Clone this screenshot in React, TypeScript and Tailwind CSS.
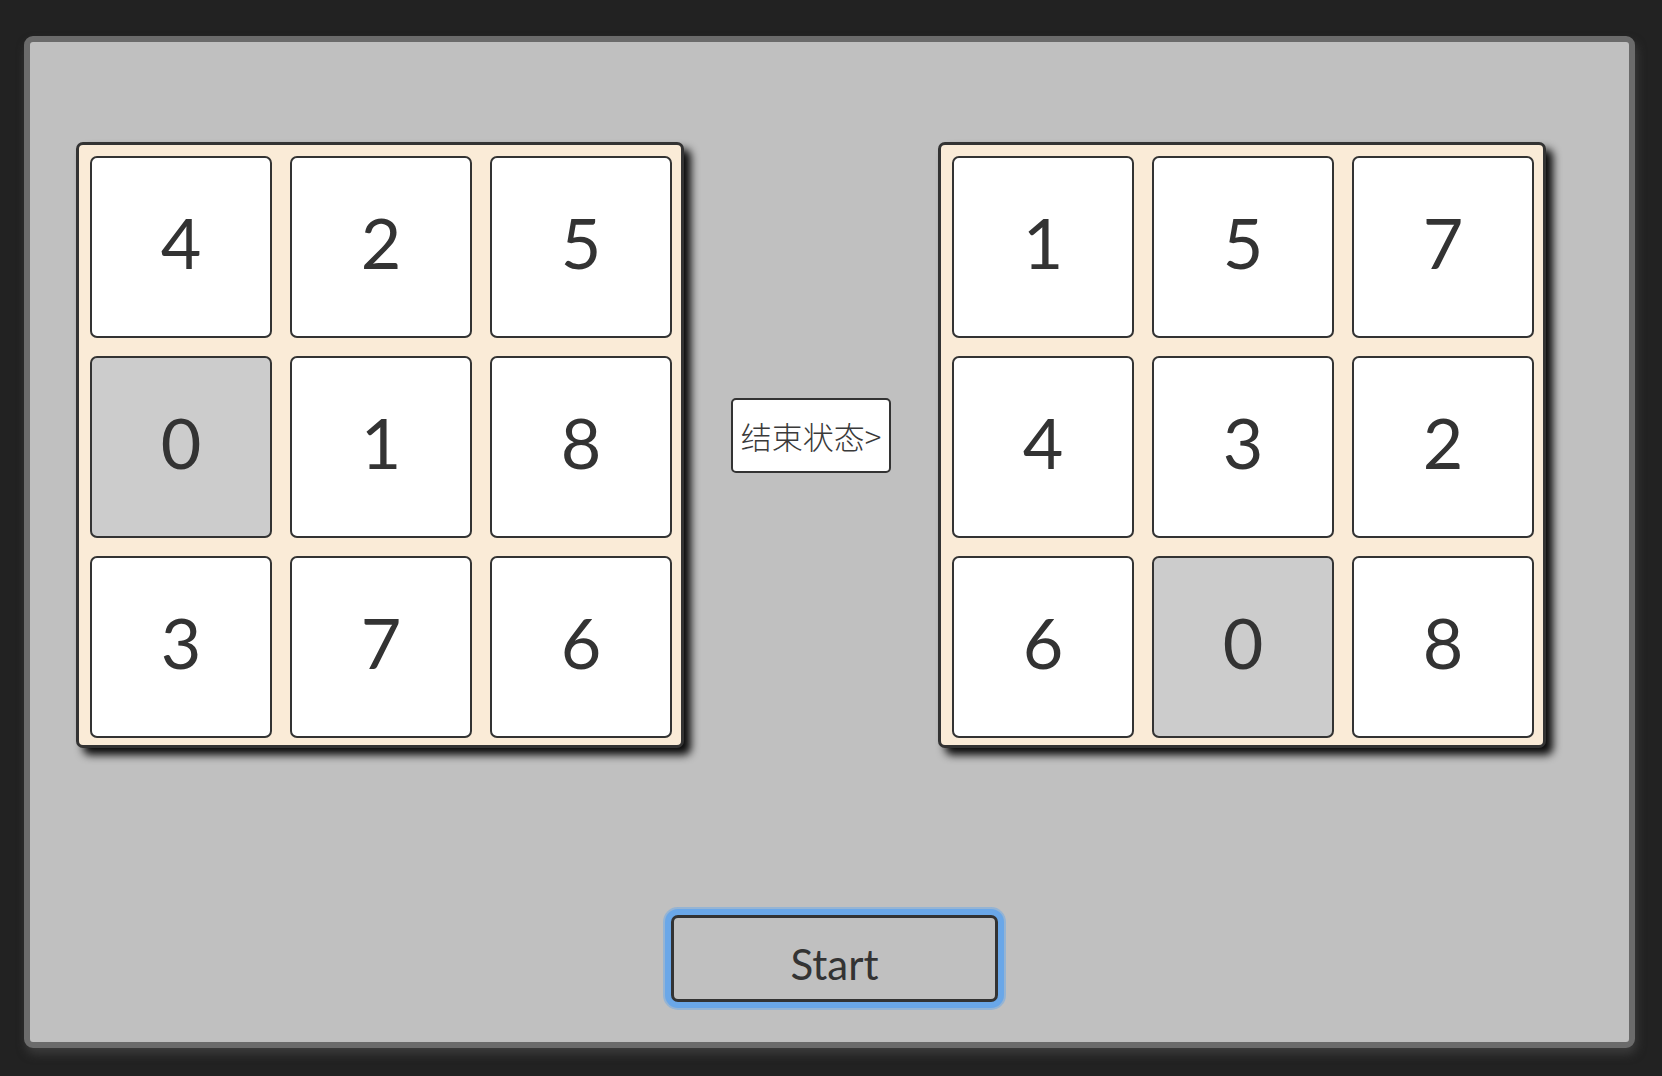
import React from "react";

const left = [4, 2, 5, 0, 1, 8, 3, 7, 6];
const right = [1, 5, 7, 4, 3, 2, 6, 0, 8];

function Board({ cells }: { cells: number[] }) {
  return (
    <div className="w-[608px] h-[606px] shrink-0 rounded-[7px] border-[3px] border-[#333333] bg-[#faebd7] pt-[11px] pl-[11px] shadow-[7px_7px_8px_rgba(0,0,0,0.95)] grid grid-cols-[182px_182px_182px] grid-rows-[182px_182px_182px] gap-[18px]">
      {cells.map((n, i) => (
        <div
          key={i}
          className={
            n === 0
              ? "flex items-center justify-center rounded-[7px] border-2 border-[#333333] bg-[#cccccc] text-[70px] font-normal leading-none text-[#333333] pb-[10px]"
              : "flex items-center justify-center rounded-[7px] border-2 border-[#333333] bg-white text-[70px] font-normal leading-none text-[#333333] pb-[10px]"
          }
        >
          {n}
        </div>
      ))}
    </div>
  );
}

export default function App() {
  return (
    <div className="w-[1662px] h-[1076px] bg-[#222222] pt-[36px] pl-[24px] font-['Lato','Noto_Sans',sans-serif]">
      <div className="w-[1611px] h-[1012px] rounded-[9px] border-[6px] border-[#6b6b6b] bg-[#c0c0c0] shadow-[2px_6px_10px_rgba(70,70,70,0.7)] flex flex-col">
        <div className="flex items-start pl-[46px] pt-[100px]">
          <Board cells={left} />
          <button className="ml-[47px] mt-[256px] w-[160px] h-[75px] shrink-0 rounded-[5px] border-2 border-[#333333] bg-white text-[31px] leading-none text-[#3a3a3a] font-['Noto_Sans_CJK_SC',sans-serif] font-light flex items-center justify-center whitespace-nowrap px-0">
            结束状态&gt;
          </button>
          <div className="ml-[47px]">
            <Board cells={right} />
          </div>
        </div>
        <div className="flex pl-[641px] pt-[167px]">
          <button className="w-[327px] h-[87px] rounded-[7px] border-[3px] border-[#333333] bg-[#c0c0c0] text-[42px] leading-none text-[#333333] font-normal shadow-[0_0_0_6px_#6aa7e8,0_0_0_8px_rgba(106,167,232,0.5)] flex items-center justify-center pt-[10px]">
            Start
          </button>
        </div>
      </div>
    </div>
  );
}
